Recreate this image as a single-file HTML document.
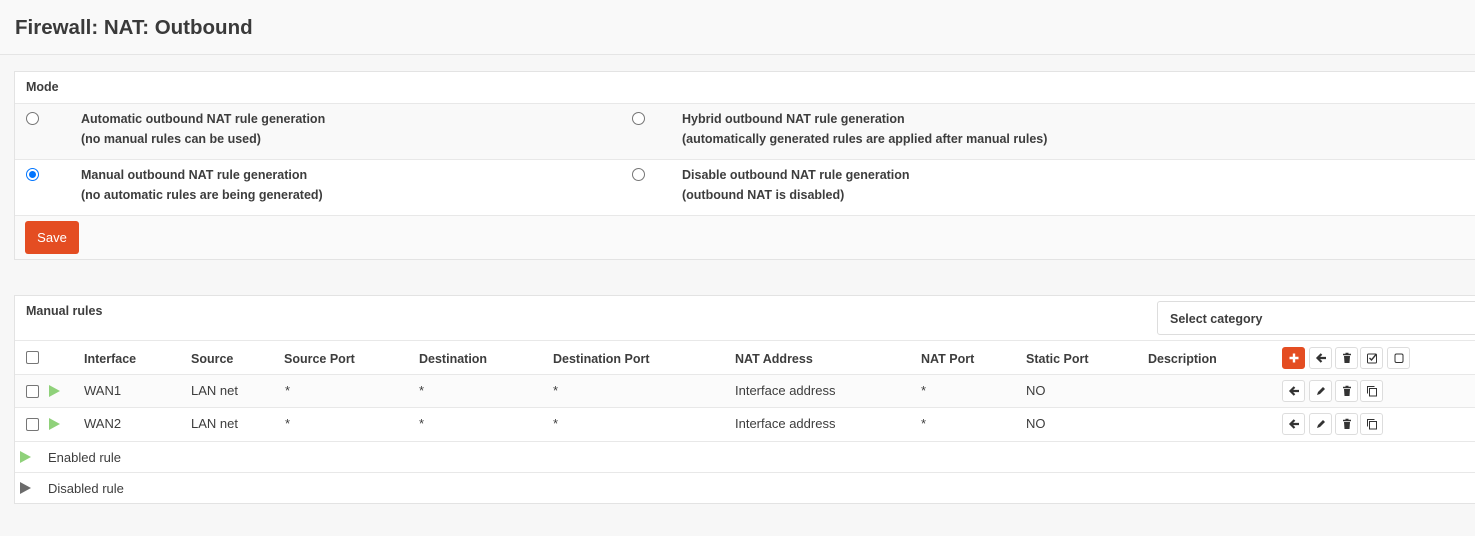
<!DOCTYPE html>
<html><head><meta charset="utf-8"><style>
*{margin:0;padding:0;box-sizing:border-box}
body{width:1475px;height:536px;background:#f7f7f7;font-family:"Liberation Sans",sans-serif;color:#3d3d3d;font-size:13px;position:relative;overflow:hidden}
.a{position:absolute}
.b{font-weight:bold;font-size:12.5px}
.panel{position:absolute;left:14px;width:1470px;background:#fff;border:1px solid #e3e3e3}
.hl{position:absolute;left:0;right:0;height:1px;background:#e8e8e8}
.radio{position:absolute;width:13px;height:13px;border:1px solid #767676;border-radius:50%;background:#fff}
.radio.on{border:1px solid #0075ff}
.radio.on::after{content:"";position:absolute;left:2px;top:2px;width:7px;height:7px;border-radius:50%;background:#0075ff}
.cb{position:absolute;width:13px;height:13px;border:1px solid #767676;border-radius:2px;background:#fff}
.btn{position:absolute;width:23px;height:22px;border:1px solid #ddd;border-radius:3px;background:#fff;display:flex;align-items:center;justify-content:center}
.btn svg{width:12px;height:12px}
.tri{position:absolute;width:0;height:0;border-top:6px solid transparent;border-bottom:6px solid transparent;border-left:11px solid #8fd17a}
</style></head><body>
<div class="a" style="left:0;top:0;width:1475px;height:55px;background:#f9f9f9;border-bottom:1px solid #e5e5e5"></div>
<div class="a" style="left:15px;top:16px;font-size:20.5px;font-weight:bold;color:#3a3a3a">Firewall: NAT: Outbound</div>

<div class="panel" style="top:71px;height:189px">
  <div class="a b" style="left:11px;top:8px">Mode</div>
  <div class="hl" style="top:31px"></div>
  <div class="a" style="left:0;right:0;top:32px;height:55px;background:#f9f9f9"></div>
  <div class="hl" style="top:87px"></div>
  <div class="hl" style="top:143px"></div>
  <div class="a" style="left:0;right:0;top:144px;height:43px;background:#fafafa"></div>
  <div class="radio" style="left:11px;top:40px"></div>
  <div class="a b" style="left:66px;top:37px;line-height:20px">Automatic outbound NAT rule generation<br>(no manual rules can be used)</div>
  <div class="radio" style="left:617px;top:40px"></div>
  <div class="a b" style="left:667px;top:37px;line-height:20px">Hybrid outbound NAT rule generation<br>(automatically generated rules are applied after manual rules)</div>
  <div class="radio on" style="left:11px;top:96px"></div>
  <div class="a b" style="left:66px;top:93px;line-height:20px">Manual outbound NAT rule generation<br>(no automatic rules are being generated)</div>
  <div class="radio" style="left:617px;top:96px"></div>
  <div class="a b" style="left:667px;top:93px;line-height:20px">Disable outbound NAT rule generation<br>(outbound NAT is disabled)</div>
  <div class="a" style="left:10px;top:149px;width:54px;height:33px;background:#e44d22;border-radius:3px;color:#fff;text-align:center;line-height:33px">Save</div>
</div>

<div class="panel" style="top:295px;height:209px">
  <div class="a b" style="left:11px;top:8px">Manual rules</div>
  <div class="a b" style="left:1142px;top:5px;width:330px;height:34px;border:1px solid #ddd;border-radius:3px;padding:10px 12px">Select category</div>
  <div class="hl" style="top:44px"></div>
  <div class="hl" style="top:78px"></div>
  <div class="a" style="left:0;right:0;top:79px;height:32px;background:#fbfbfb"></div>
  <div class="hl" style="top:111px"></div>
  <div class="hl" style="top:145px"></div>
  <div class="hl" style="top:176px"></div>
  <div class="cb" style="left:11px;top:55px"></div>
  <div class="a b" style="top:56px;left:0;width:100%">
    <span class="a" style="left:69px">Interface</span><span class="a" style="left:176px">Source</span><span class="a" style="left:269px">Source Port</span><span class="a" style="left:404px">Destination</span><span class="a" style="left:538px">Destination Port</span><span class="a" style="left:720px">NAT Address</span><span class="a" style="left:906px">NAT Port</span><span class="a" style="left:1011px">Static Port</span><span class="a" style="left:1133px">Description</span>
  </div>
  <div class="cb" style="left:11px;top:89px"></div><div class="tri" style="left:34px;top:89px"></div>
  <div class="a" style="top:87px;left:0;width:100%">
    <span class="a" style="left:69px">WAN1</span><span class="a" style="left:176px">LAN net</span><span class="a" style="left:270px">*</span><span class="a" style="left:404px">*</span><span class="a" style="left:538px">*</span><span class="a" style="left:720px">Interface address</span><span class="a" style="left:906px">*</span><span class="a" style="left:1011px">NO</span>
  </div>
  <div class="cb" style="left:11px;top:122px"></div><div class="tri" style="left:34px;top:122px"></div>
  <div class="a" style="top:120px;left:0;width:100%">
    <span class="a" style="left:69px">WAN2</span><span class="a" style="left:176px">LAN net</span><span class="a" style="left:270px">*</span><span class="a" style="left:404px">*</span><span class="a" style="left:538px">*</span><span class="a" style="left:720px">Interface address</span><span class="a" style="left:906px">*</span><span class="a" style="left:1011px">NO</span>
  </div>
  <div class="tri" style="left:5px;top:155px"></div><div class="a" style="left:33px;top:154px">Enabled rule</div>
  <div class="tri" style="left:5px;top:186px;border-left-color:#6b6b6b"></div><div class="a" style="left:33px;top:185px">Disabled rule</div>
</div>

<div class="btn" style="left:1282px;top:347px;background:#e44d22;border-color:#e44d22"><svg viewBox="0 0 12 12"><path d="M6 1.5v9M1.5 6h9" stroke="#fff" stroke-width="2.4"/></svg></div>
<div class="btn" style="left:1309px;top:347px"><svg viewBox="0 0 12 12"><path d="M11 6H3M6.5 2L2.5 6l4 4" stroke="#333" stroke-width="2.2" fill="none"/></svg></div>
<div class="btn" style="left:1335px;top:347px"><svg viewBox="0 0 12 12"><path d="M2 2.5h8M4.5 1.5h3" stroke="#333" stroke-width="1.4"/><path d="M3 4h6l-.5 7h-5z" fill="#333"/></svg></div>
<div class="btn" style="left:1360px;top:347px"><svg viewBox="0 0 12 12"><rect x="1.5" y="2" width="9" height="9" rx="1" stroke="#333" fill="none"/><path d="M3.5 6l2 2L10 2.5" stroke="#333" stroke-width="1.4" fill="none"/></svg></div>
<div class="btn" style="left:1387px;top:347px"><svg viewBox="0 0 12 12"><rect x="2" y="2" width="8" height="8.5" rx="1.5" stroke="#333" fill="none"/></svg></div>
<div class="btn" style="left:1282px;top:380px"><svg viewBox="0 0 12 12"><path d="M11 6H3M6.5 2L2.5 6l4 4" stroke="#333" stroke-width="2.2" fill="none"/></svg></div>
<div class="btn" style="left:1309px;top:380px"><svg viewBox="0 0 12 12"><path d="M2 10l1-3 5-5 2 2-5 5z" fill="#333"/></svg></div>
<div class="btn" style="left:1335px;top:380px"><svg viewBox="0 0 12 12"><path d="M2 2.5h8M4.5 1.5h3" stroke="#333" stroke-width="1.4"/><path d="M3 4h6l-.5 7h-5z" fill="#333"/></svg></div>
<div class="btn" style="left:1360px;top:380px"><svg viewBox="0 0 12 12"><path d="M1.5 8.5V1.5h7" stroke="#333" fill="none"/><rect x="3.5" y="3.5" width="7" height="7.5" stroke="#333" fill="none"/></svg></div>
<div class="btn" style="left:1282px;top:413px"><svg viewBox="0 0 12 12"><path d="M11 6H3M6.5 2L2.5 6l4 4" stroke="#333" stroke-width="2.2" fill="none"/></svg></div>
<div class="btn" style="left:1309px;top:413px"><svg viewBox="0 0 12 12"><path d="M2 10l1-3 5-5 2 2-5 5z" fill="#333"/></svg></div>
<div class="btn" style="left:1335px;top:413px"><svg viewBox="0 0 12 12"><path d="M2 2.5h8M4.5 1.5h3" stroke="#333" stroke-width="1.4"/><path d="M3 4h6l-.5 7h-5z" fill="#333"/></svg></div>
<div class="btn" style="left:1360px;top:413px"><svg viewBox="0 0 12 12"><path d="M1.5 8.5V1.5h7" stroke="#333" fill="none"/><rect x="3.5" y="3.5" width="7" height="7.5" stroke="#333" fill="none"/></svg></div>
</body></html>
